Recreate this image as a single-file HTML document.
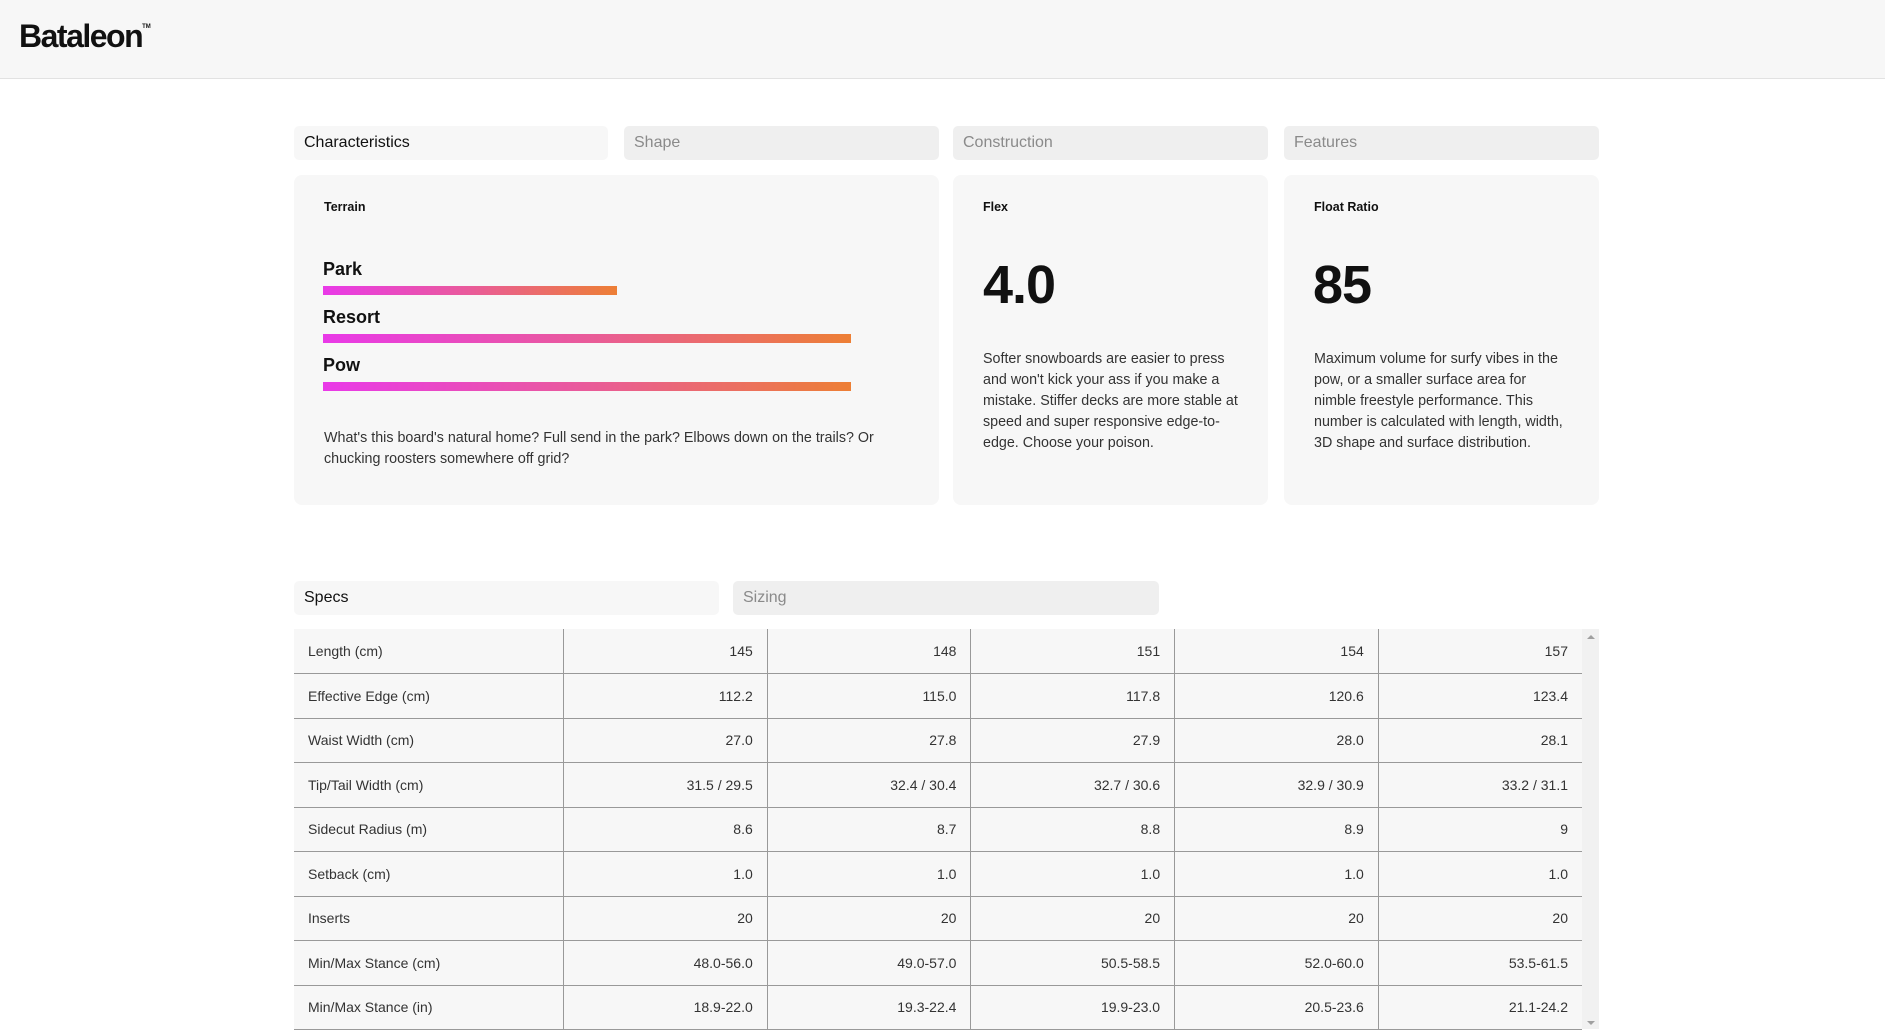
<!DOCTYPE html>
<html><head><meta charset="utf-8"><style>
*{margin:0;padding:0;box-sizing:border-box}
body{width:1885px;height:1029px;overflow:hidden;background:#fff;font-family:"Liberation Sans",sans-serif;color:#111;position:relative}
.hdr{position:absolute;left:0;top:0;width:1885px;height:79px;background:#f7f7f7;border-bottom:1px solid #e2e2e2}
.logo{position:absolute;left:19px;top:18px;font-size:32px;font-weight:bold;letter-spacing:-1.5px}
.logo sup{font-size:6px;letter-spacing:0;vertical-align:top;position:relative;top:6px}
.tab{position:absolute;height:34px;border-radius:5px;background:#efefef;color:#8a8a8a;font-size:16px;line-height:34px;padding-left:10px}
.tab.on{background:#f7f7f7;color:#111}
.card{position:absolute;top:175px;height:330px;background:#f7f7f7;border-radius:8px}
.lbl{position:absolute;top:200px;font-size:12.5px;font-weight:bold}
.big{position:absolute;top:254px;font-size:54px;font-weight:bold;letter-spacing:-1px}
.p{position:absolute;font-size:14.3px;line-height:21px;color:#333}
.tl{position:absolute;left:323px;font-size:18px;font-weight:bold}
.bar{position:absolute;left:323px;height:9px;background:linear-gradient(90deg,#e93ae8,#e95b9a 50%,#ed7f35)}
table{position:absolute;left:294px;top:629px;width:1288px;border-collapse:collapse;background:#f7f7f7;font-size:14px;color:#333}
td{height:44.5px;border-bottom:1.5px solid #999;border-left:1.5px solid #999;text-align:right;padding-right:14px;width:204px}
td:first-child{border-left:none;text-align:left;padding-left:14px;width:270px}
.sb{position:absolute;left:1582px;top:629px;width:17px;height:400px;background:#f1f1f1}
</style></head><body>
<div class="hdr"><div class="logo">Bataleon<sup>TM</sup></div></div>
<div class="tab on" style="left:294px;top:126px;width:314px">Characteristics</div>
<div class="tab" style="left:624px;top:126px;width:315px">Shape</div>
<div class="tab" style="left:953px;top:126px;width:315px">Construction</div>
<div class="tab" style="left:1284px;top:126px;width:315px">Features</div>
<div class="card" style="left:294px;width:645px"></div>
<div class="card" style="left:953px;width:315px"></div>
<div class="card" style="left:1284px;width:315px"></div>
<div class="lbl" style="left:324px">Terrain</div>
<div class="tl" style="top:259px">Park</div><div class="bar" style="top:286px;width:294px"></div>
<div class="tl" style="top:307px">Resort</div><div class="bar" style="top:334px;width:528px"></div>
<div class="tl" style="top:355px">Pow</div><div class="bar" style="top:382px;width:528px"></div>
<div class="p" style="left:324px;top:428px;width:550px">What's this board's natural home? Full send in the park? Elbows down on the trails? Or chucking roosters somewhere off grid?</div>
<div class="lbl" style="left:983px">Flex</div>
<div class="big" style="left:983px">4.0</div>
<div class="p" style="left:983px;top:349px;width:262px">Softer snowboards are easier to press and won't kick your ass if you make a mistake. Stiffer decks are more stable at speed and super responsive edge-to-edge. Choose your poison.</div>
<div class="lbl" style="left:1314px">Float Ratio</div>
<div class="big" style="left:1313px">85</div>
<div class="p" style="left:1314px;top:349px;width:250px">Maximum volume for surfy vibes in the pow, or a smaller surface area for nimble freestyle performance. This number is calculated with length, width, 3D shape and surface distribution.</div>
<div class="tab on" style="left:294px;top:581px;width:425px">Specs</div>
<div class="tab" style="left:733px;top:581px;width:426px">Sizing</div>
<table>
<tr><td>Length (cm)</td><td>145</td><td>148</td><td>151</td><td>154</td><td>157</td></tr>
<tr><td>Effective Edge (cm)</td><td>112.2</td><td>115.0</td><td>117.8</td><td>120.6</td><td>123.4</td></tr>
<tr><td>Waist Width (cm)</td><td>27.0</td><td>27.8</td><td>27.9</td><td>28.0</td><td>28.1</td></tr>
<tr><td>Tip/Tail Width (cm)</td><td>31.5 / 29.5</td><td>32.4 / 30.4</td><td>32.7 / 30.6</td><td>32.9 / 30.9</td><td>33.2 / 31.1</td></tr>
<tr><td>Sidecut Radius (m)</td><td>8.6</td><td>8.7</td><td>8.8</td><td>8.9</td><td>9</td></tr>
<tr><td>Setback (cm)</td><td>1.0</td><td>1.0</td><td>1.0</td><td>1.0</td><td>1.0</td></tr>
<tr><td>Inserts</td><td>20</td><td>20</td><td>20</td><td>20</td><td>20</td></tr>
<tr><td>Min/Max Stance (cm)</td><td>48.0-56.0</td><td>49.0-57.0</td><td>50.5-58.5</td><td>52.0-60.0</td><td>53.5-61.5</td></tr>
<tr><td>Min/Max Stance (in)</td><td>18.9-22.0</td><td>19.3-22.4</td><td>19.9-23.0</td><td>20.5-23.6</td><td>21.1-24.2</td></tr>
</table>
<div class="sb"><div style="position:absolute;left:5px;top:6px;border:4px solid transparent;border-bottom-color:#a0a0a0;border-top:none"></div><div style="position:absolute;left:5px;bottom:4px;border:4px solid transparent;border-top-color:#a0a0a0;border-bottom:none"></div></div>
</body></html>
